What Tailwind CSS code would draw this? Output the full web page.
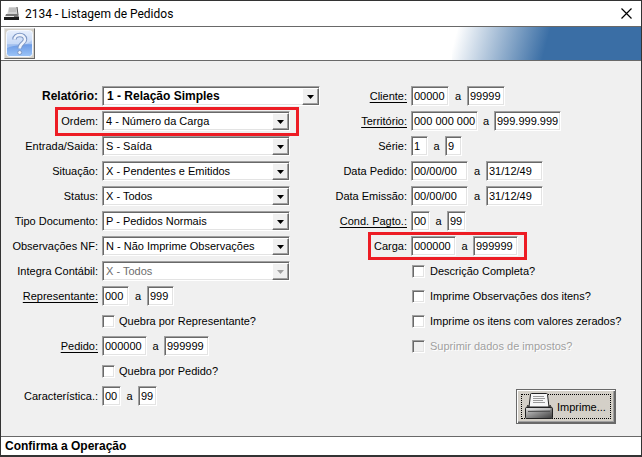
<!DOCTYPE html>
<html lang="pt-BR">
<head>
<meta charset="utf-8">
<title>2134 - Listagem de Pedidos</title>
<script src="https://cdn.jsdelivr.net/npm/@tailwindcss/browser@4"></script>
</head>
<body class="min-h-screen flex flex-col border border-b-2 border-[#333333] bg-[#f0f0f0] font-['Liberation_Sans',Arial,sans-serif] text-[11px] leading-4 text-black">
<header class="flex h-[25px] items-center bg-white pl-[3px] pr-[9px]">
  <svg class="h-4 w-4" viewBox="0 0 16 16" aria-hidden="true">
    <path d="M5 1h8l1 8H3z" fill="#d2d2d2"/><path d="M13 1l1 8" stroke="#555" fill="none"/><path d="M5 3h7M5 5h7" stroke="#aaa"/>
    <path d="M2 8h12l1 3H1z" fill="#777"/><path d="M0 11h15v3H0z" fill="#1a1a1a"/><path d="M1 10.500h9" stroke="#eee"/>
  </svg>
  <h1 class="ml-[5px] flex-1 font-[Roboto,'Noto_Sans',sans-serif] text-[12px]">2134 - Listagem de Pedidos</h1>
  <button type="button" aria-label="Fechar" class="h-[11px] w-[11px]">
    <svg viewBox="0 0 11 11" class="h-[11px] w-[11px]"><path d="M.5.5l10 10M10.500.5l-10 10" stroke="#000" stroke-width="1.200"/></svg>
  </button>
</header>
<div class="flex h-[35px] items-center justify-between border-y border-[#696969] bg-white pl-[3px]">
  <button type="button" aria-label="Ajuda" class="h-[31px] w-[31px] border border-t-[#e3e3e3] border-l-[#e3e3e3] border-r-[#696969] border-b-[#696969] bg-[#d4d0c8] p-px">
    <svg viewBox="0 0 27 27" class="h-[27px] w-[27px]" aria-hidden="true">
      <defs><linearGradient id="help" x1="0" y1="0" x2="0" y2="1"><stop offset="0" stop-color="#dbe7fb"/><stop offset=".5" stop-color="#a9c6f3"/><stop offset=".55" stop-color="#6d9ce6"/><stop offset="1" stop-color="#9cc4f7"/></linearGradient></defs>
      <rect x=".5" y=".5" width="26" height="26" rx="3" fill="url(#help)" stroke="#f4f8ff"/>
      <path d="M1 1h25v9C20 17 10 14 1 18z" fill="#fff" opacity=".35"/>
      <path d="M8.500 9.500C8.500 3.500 19 3.500 19 9.500 19 13.500 13.700 13 13.700 18.500" fill="none" stroke="#7d97c4" stroke-width="4.500"/>
      <path d="M8.500 9.500C8.500 3.500 19 3.500 19 9.500 19 13.500 13.700 13 13.700 18.500" fill="none" stroke="#eef3fc" stroke-width="2.500"/>
      <circle cx="13.700" cy="22.500" r="2" fill="#eef3fc" stroke="#7d97c4"/>
    </svg>
  </button>
  <div class="h-full w-[189px] bg-[linear-gradient(105deg,#fff_3%,#3a6ea5_50%)]"></div>
</div>

<main class="grid flex-1 grid-cols-[333px_1fr] pt-[25px] pb-3">
  <form class="flex flex-col gap-[5px]" id="left">
    <div class="flex h-5 items-center gap-1">
      <label for="rel" class="w-[97px] text-right text-[12px] font-bold">Relatório:</label>
      <div class="relative w-[218px]">
        <select id="rel" class="block h-5 w-full appearance-none border border-t-[#a0a0a0] border-l-[#a0a0a0] border-r-white border-b-white bg-white pl-1 text-[12px] font-bold shadow-[inset_1px_1px_#696969,inset_-1px_-1px_#e3e3e3]"><option>1 - Relação Simples</option></select>
        <span class="pointer-events-none absolute top-[2px] right-px flex h-[17px] w-[17px] items-center justify-center border border-t-white border-l-white border-r-[#696969] border-b-[#696969] bg-[#f0f0f0] shadow-[inset_-1px_-1px_#a0a0a0]"><svg class="h-1 w-[7px]" viewBox="0 0 7 4"><path d="M0 0h7L3.500 4z"/></svg></span>
      </div>
    </div>
    <div class="relative flex h-5 items-center gap-1">
      <label for="ord" class="w-[97px] text-right">Ordem:</label>
      <div class="relative w-[188px]">
        <select id="ord" class="block h-5 w-full appearance-none border border-t-[#a0a0a0] border-l-[#a0a0a0] border-r-white border-b-white bg-white pl-[3px] shadow-[inset_1px_1px_#696969,inset_-1px_-1px_#e3e3e3]"><option>4 - Número da Carga</option></select>
        <span class="pointer-events-none absolute top-[2px] right-px flex h-[17px] w-[17px] items-center justify-center border border-t-white border-l-white border-r-[#696969] border-b-[#696969] bg-[#f0f0f0] shadow-[inset_-1px_-1px_#a0a0a0]"><svg class="h-1 w-[7px]" viewBox="0 0 7 4"><path d="M0 0h7L3.500 4z"/></svg></span>
      </div>
      <div class="pointer-events-none absolute -top-1 -bottom-[5px] left-[54px] w-[244px] border-3 border-[#ed1c24]"></div>
    </div>
    <div class="flex h-5 items-center gap-1">
      <label for="ent" class="w-[97px] text-right">Entrada/Saida:</label>
      <div class="relative w-[188px]">
        <select id="ent" class="block h-5 w-full appearance-none border border-t-[#a0a0a0] border-l-[#a0a0a0] border-r-white border-b-white bg-white pl-[3px] shadow-[inset_1px_1px_#696969,inset_-1px_-1px_#e3e3e3]"><option>S - Saída</option></select>
        <span class="pointer-events-none absolute top-[2px] right-px flex h-[17px] w-[17px] items-center justify-center border border-t-white border-l-white border-r-[#696969] border-b-[#696969] bg-[#f0f0f0] shadow-[inset_-1px_-1px_#a0a0a0]"><svg class="h-1 w-[7px]" viewBox="0 0 7 4"><path d="M0 0h7L3.500 4z"/></svg></span>
      </div>
    </div>
    <div class="flex h-5 items-center gap-1">
      <label for="sit" class="w-[97px] text-right">Situação:</label>
      <div class="relative w-[188px]">
        <select id="sit" class="block h-5 w-full appearance-none border border-t-[#a0a0a0] border-l-[#a0a0a0] border-r-white border-b-white bg-white pl-[3px] shadow-[inset_1px_1px_#696969,inset_-1px_-1px_#e3e3e3]"><option>X - Pendentes e Emitidos</option></select>
        <span class="pointer-events-none absolute top-[2px] right-px flex h-[17px] w-[17px] items-center justify-center border border-t-white border-l-white border-r-[#696969] border-b-[#696969] bg-[#f0f0f0] shadow-[inset_-1px_-1px_#a0a0a0]"><svg class="h-1 w-[7px]" viewBox="0 0 7 4"><path d="M0 0h7L3.500 4z"/></svg></span>
      </div>
    </div>
    <div class="flex h-5 items-center gap-1">
      <label for="sta" class="w-[97px] text-right">Status:</label>
      <div class="relative w-[188px]">
        <select id="sta" class="block h-5 w-full appearance-none border border-t-[#a0a0a0] border-l-[#a0a0a0] border-r-white border-b-white bg-white pl-[3px] shadow-[inset_1px_1px_#696969,inset_-1px_-1px_#e3e3e3]"><option>X - Todos</option></select>
        <span class="pointer-events-none absolute top-[2px] right-px flex h-[17px] w-[17px] items-center justify-center border border-t-white border-l-white border-r-[#696969] border-b-[#696969] bg-[#f0f0f0] shadow-[inset_-1px_-1px_#a0a0a0]"><svg class="h-1 w-[7px]" viewBox="0 0 7 4"><path d="M0 0h7L3.500 4z"/></svg></span>
      </div>
    </div>
    <div class="flex h-5 items-center gap-1">
      <label for="tip" class="w-[97px] text-right">Tipo Documento:</label>
      <div class="relative w-[188px]">
        <select id="tip" class="block h-5 w-full appearance-none border border-t-[#a0a0a0] border-l-[#a0a0a0] border-r-white border-b-white bg-white pl-[3px] shadow-[inset_1px_1px_#696969,inset_-1px_-1px_#e3e3e3]"><option>P - Pedidos Normais</option></select>
        <span class="pointer-events-none absolute top-[2px] right-px flex h-[17px] w-[17px] items-center justify-center border border-t-white border-l-white border-r-[#696969] border-b-[#696969] bg-[#f0f0f0] shadow-[inset_-1px_-1px_#a0a0a0]"><svg class="h-1 w-[7px]" viewBox="0 0 7 4"><path d="M0 0h7L3.500 4z"/></svg></span>
      </div>
    </div>
    <div class="flex h-5 items-center gap-1">
      <label for="obs" class="w-[97px] text-right">Observações NF:</label>
      <div class="relative w-[188px]">
        <select id="obs" class="block h-5 w-full appearance-none border border-t-[#a0a0a0] border-l-[#a0a0a0] border-r-white border-b-white bg-white pl-[3px] shadow-[inset_1px_1px_#696969,inset_-1px_-1px_#e3e3e3]"><option>N - Não Imprime Observações</option></select>
        <span class="pointer-events-none absolute top-[2px] right-px flex h-[17px] w-[17px] items-center justify-center border border-t-white border-l-white border-r-[#696969] border-b-[#696969] bg-[#f0f0f0] shadow-[inset_-1px_-1px_#a0a0a0]"><svg class="h-1 w-[7px]" viewBox="0 0 7 4"><path d="M0 0h7L3.500 4z"/></svg></span>
      </div>
    </div>
    <div class="flex h-5 items-center gap-1">
      <label for="int" class="w-[97px] text-right">Integra Contábil:</label>
      <div class="relative w-[188px]">
        <select id="int" disabled class="block h-5 w-full appearance-none border border-t-[#a0a0a0] border-l-[#a0a0a0] border-r-white border-b-white bg-white pl-[3px] text-[#6d6d6d] opacity-100 shadow-[inset_1px_1px_#696969,inset_-1px_-1px_#e3e3e3]"><option>X - Todos</option></select>
        <span class="pointer-events-none absolute top-[2px] right-px flex h-[17px] w-[17px] items-center justify-center border border-t-white border-l-white border-r-[#696969] border-b-[#696969] bg-[#f0f0f0] shadow-[inset_-1px_-1px_#a0a0a0]"><svg class="h-1 w-[7px] text-[#a0a0a0]" viewBox="0 0 7 4"><path fill="currentColor" d="M0 0h7L3.500 4z"/></svg></span>
      </div>
    </div>
    <div class="flex h-5 items-center gap-1">
      <label for="rep" class="w-[97px] text-right underline underline-offset-2">Representante:</label>
      <div class="flex items-center">
        <input id="rep" value="000" class="h-5 w-[27px] border border-t-[#a0a0a0] border-l-[#a0a0a0] border-r-white border-b-white bg-white pl-[2px] shadow-[inset_1px_1px_#696969,inset_-1px_-1px_#e3e3e3]">
        <span class="w-[18px] text-center">a</span>
        <input aria-label="Representante final" value="999" class="h-5 w-[27px] border border-t-[#a0a0a0] border-l-[#a0a0a0] border-r-white border-b-white bg-white pl-[2px] shadow-[inset_1px_1px_#696969,inset_-1px_-1px_#e3e3e3]">
      </div>
    </div>
    <div class="flex h-5 items-center gap-1 pl-[101px]">
      <input type="checkbox" id="qrep" class="h-[13px] w-[13px] appearance-none border border-t-[#a0a0a0] border-l-[#a0a0a0] border-r-white border-b-white bg-white shadow-[inset_1px_1px_#696969,inset_-1px_-1px_#e3e3e3]">
      <label for="qrep">Quebra por Representante?</label>
    </div>
    <div class="flex h-5 items-center gap-1">
      <label for="ped" class="w-[97px] text-right underline underline-offset-2">Pedido:</label>
      <div class="flex items-center">
        <input id="ped" value="000000" class="h-5 w-[45px] border border-t-[#a0a0a0] border-l-[#a0a0a0] border-r-white border-b-white bg-white pl-[2px] shadow-[inset_1px_1px_#696969,inset_-1px_-1px_#e3e3e3]">
        <span class="w-[17px] text-center">a</span>
        <input aria-label="Pedido final" value="999999" class="h-5 w-[45px] border border-t-[#a0a0a0] border-l-[#a0a0a0] border-r-white border-b-white bg-white pl-[2px] shadow-[inset_1px_1px_#696969,inset_-1px_-1px_#e3e3e3]">
      </div>
    </div>
    <div class="flex h-5 items-center gap-1 pl-[101px]">
      <input type="checkbox" id="qped" class="h-[13px] w-[13px] appearance-none border border-t-[#a0a0a0] border-l-[#a0a0a0] border-r-white border-b-white bg-white shadow-[inset_1px_1px_#696969,inset_-1px_-1px_#e3e3e3]">
      <label for="qped">Quebra por Pedido?</label>
    </div>
    <div class="flex h-5 items-center gap-1">
      <label for="car" class="w-[97px] text-right">Característica.:</label>
      <div class="flex items-center">
        <input id="car" value="00" class="h-5 w-[19px] border border-t-[#a0a0a0] border-l-[#a0a0a0] border-r-white border-b-white bg-white pl-[2px] shadow-[inset_1px_1px_#696969,inset_-1px_-1px_#e3e3e3]">
        <span class="w-[17px] text-center">a</span>
        <input aria-label="Característica final" value="99" class="h-5 w-[19px] border border-t-[#a0a0a0] border-l-[#a0a0a0] border-r-white border-b-white bg-white pl-[2px] shadow-[inset_1px_1px_#696969,inset_-1px_-1px_#e3e3e3]">
      </div>
    </div>
  </form>

  <form class="flex flex-col gap-[5px]" id="right">
    <div class="flex h-5 items-center gap-1">
      <label for="cli" class="w-[73px] text-right underline underline-offset-2">Cliente:</label>
      <div class="flex items-center">
        <input id="cli" value="00000" class="h-5 w-[38px] border border-t-[#a0a0a0] border-l-[#a0a0a0] border-r-white border-b-white bg-white pl-[2px] shadow-[inset_1px_1px_#696969,inset_-1px_-1px_#e3e3e3]">
        <span class="w-[18px] text-center">a</span>
        <input aria-label="Cliente final" value="99999" class="h-5 w-[38px] border border-t-[#a0a0a0] border-l-[#a0a0a0] border-r-white border-b-white bg-white pl-[2px] shadow-[inset_1px_1px_#696969,inset_-1px_-1px_#e3e3e3]">
      </div>
    </div>
    <div class="flex h-5 items-center gap-1">
      <label for="ter" class="w-[73px] text-right underline underline-offset-2">Território:</label>
      <div class="flex items-center">
        <input id="ter" value="000 000 000" class="h-5 w-[67px] border border-t-[#a0a0a0] border-l-[#a0a0a0] border-r-white border-b-white bg-white pl-[2px] shadow-[inset_1px_1px_#696969,inset_-1px_-1px_#e3e3e3]">
        <span class="w-4 text-center">a</span>
        <input aria-label="Território final" value="999.999.999" class="h-5 w-[67px] border border-t-[#a0a0a0] border-l-[#a0a0a0] border-r-white border-b-white bg-white pl-[2px] shadow-[inset_1px_1px_#696969,inset_-1px_-1px_#e3e3e3]">
      </div>
    </div>
    <div class="flex h-5 items-center gap-1">
      <label for="ser" class="w-[73px] text-right">Série:</label>
      <div class="flex items-center">
        <input id="ser" value="1" class="h-5 w-[17px] border border-t-[#a0a0a0] border-l-[#a0a0a0] border-r-white border-b-white bg-white pl-[2px] shadow-[inset_1px_1px_#696969,inset_-1px_-1px_#e3e3e3]">
        <span class="w-[17px] text-center">a</span>
        <input aria-label="Série final" value="9" class="h-5 w-[17px] border border-t-[#a0a0a0] border-l-[#a0a0a0] border-r-white border-b-white bg-white pl-[2px] shadow-[inset_1px_1px_#696969,inset_-1px_-1px_#e3e3e3]">
      </div>
    </div>
    <div class="flex h-5 items-center gap-1">
      <label for="dpe" class="w-[73px] text-right">Data Pedido:</label>
      <div class="flex items-center">
        <input id="dpe" value="00/00/00" class="h-5 w-[57px] border border-t-[#a0a0a0] border-l-[#a0a0a0] border-r-white border-b-white bg-white pl-[2px] shadow-[inset_1px_1px_#696969,inset_-1px_-1px_#e3e3e3]">
        <span class="w-[18px] text-center">a</span>
        <input aria-label="Data Pedido final" value="31/12/49" class="h-5 w-[57px] border border-t-[#a0a0a0] border-l-[#a0a0a0] border-r-white border-b-white bg-white pl-[2px] shadow-[inset_1px_1px_#696969,inset_-1px_-1px_#e3e3e3]">
      </div>
    </div>
    <div class="flex h-5 items-center gap-1">
      <label for="dem" class="w-[73px] text-right whitespace-nowrap">Data Emissão:</label>
      <div class="flex items-center">
        <input id="dem" value="00/00/00" class="h-5 w-[57px] border border-t-[#a0a0a0] border-l-[#a0a0a0] border-r-white border-b-white bg-white pl-[2px] shadow-[inset_1px_1px_#696969,inset_-1px_-1px_#e3e3e3]">
        <span class="w-[18px] text-center">a</span>
        <input aria-label="Data Emissão final" value="31/12/49" class="h-5 w-[57px] border border-t-[#a0a0a0] border-l-[#a0a0a0] border-r-white border-b-white bg-white pl-[2px] shadow-[inset_1px_1px_#696969,inset_-1px_-1px_#e3e3e3]">
      </div>
    </div>
    <div class="flex h-5 items-center gap-1">
      <label for="con" class="w-[73px] text-right whitespace-nowrap underline underline-offset-2">Cond. Pagto.:</label>
      <div class="flex items-center">
        <input id="con" value="00" class="h-5 w-[19px] border border-t-[#a0a0a0] border-l-[#a0a0a0] border-r-white border-b-white bg-white pl-[2px] shadow-[inset_1px_1px_#696969,inset_-1px_-1px_#e3e3e3]">
        <span class="w-[17px] text-center">a</span>
        <input aria-label="Cond. Pagto. final" value="99" class="h-5 w-[19px] border border-t-[#a0a0a0] border-l-[#a0a0a0] border-r-white border-b-white bg-white pl-[2px] shadow-[inset_1px_1px_#696969,inset_-1px_-1px_#e3e3e3]">
      </div>
    </div>
    <div class="relative flex h-5 items-center gap-1">
      <label for="crg" class="w-[73px] text-right">Carga:</label>
      <div class="flex items-center">
        <input id="crg" value="000000" class="h-5 w-[45px] border border-t-[#a0a0a0] border-l-[#a0a0a0] border-r-white border-b-white bg-white pl-[2px] shadow-[inset_1px_1px_#696969,inset_-1px_-1px_#e3e3e3]">
        <span class="w-[17px] text-center">a</span>
        <input aria-label="Carga final" value="999999" class="h-5 w-[45px] border border-t-[#a0a0a0] border-l-[#a0a0a0] border-r-white border-b-white bg-white pl-[2px] shadow-[inset_1px_1px_#696969,inset_-1px_-1px_#e3e3e3]">
      </div>
      <div class="pointer-events-none absolute -top-1 -bottom-1 left-[34px] w-[159px] border-3 border-[#ed1c24]"></div>
    </div>
    <div class="flex h-5 items-center gap-[5px] pl-[78px]">
      <input type="checkbox" id="dco" class="h-[13px] w-[13px] appearance-none border border-t-[#a0a0a0] border-l-[#a0a0a0] border-r-white border-b-white bg-white shadow-[inset_1px_1px_#696969,inset_-1px_-1px_#e3e3e3]">
      <label for="dco">Descrição Completa?</label>
    </div>
    <div class="flex h-5 items-center gap-[5px] pl-[78px]">
      <input type="checkbox" id="iob" class="h-[13px] w-[13px] appearance-none border border-t-[#a0a0a0] border-l-[#a0a0a0] border-r-white border-b-white bg-white shadow-[inset_1px_1px_#696969,inset_-1px_-1px_#e3e3e3]">
      <label for="iob">Imprime Observações dos itens?</label>
    </div>
    <div class="flex h-5 items-center gap-[5px] pl-[78px]">
      <input type="checkbox" id="ize" class="h-[13px] w-[13px] appearance-none border border-t-[#a0a0a0] border-l-[#a0a0a0] border-r-white border-b-white bg-white shadow-[inset_1px_1px_#696969,inset_-1px_-1px_#e3e3e3]">
      <label for="ize">Imprime os itens com valores zerados?</label>
    </div>
    <div class="flex h-5 items-center gap-[5px] pl-[78px]">
      <input type="checkbox" id="sup" disabled class="h-[13px] w-[13px] appearance-none border border-t-[#a0a0a0] border-l-[#a0a0a0] border-r-white border-b-white bg-[#f0f0f0] shadow-[inset_1px_1px_#696969,inset_-1px_-1px_#e3e3e3]">
      <label for="sup" class="text-[#a0a0a0] [text-shadow:1px_1px_#fff]">Suprimir dados de impostos?</label>
    </div>
    <button type="button" class="mt-7 mr-[25px] flex h-[35px] w-[100px] self-end border border-[#696969] bg-[#d4d0c8] p-1 shadow-[inset_1px_1px_#fff,inset_-1px_-1px_#696969,inset_-2px_-2px_#a0a0a0]">
      <span class="flex h-[25px] w-[90px] items-center gap-1 border border-dotted border-black pl-[3px]">
        <svg class="h-[27px] w-7 shrink-0" viewBox="0 0 28 27" aria-hidden="true">
          <defs>
            <linearGradient id="tray" x1="0" y1="0" x2="0" y2="1"><stop offset="0" stop-color="#f4f4f4"/><stop offset="1" stop-color="#8a8a8a"/></linearGradient>
            <linearGradient id="base" x1="0" y1="0" x2="1" y2="1"><stop offset="0" stop-color="#d8d8d8"/><stop offset="1" stop-color="#3c3c3c"/></linearGradient>
          </defs>
          <path d="M3 12L.8 16h26.400L25 12v2H3z" fill="url(#tray)" stroke="#333"/>
          <path d="M5.500 1.500Q5.500.5 6.500.5h15q1 0 1 1L24 14H4z" fill="#f7f7f7" stroke="#222"/>
          <path d="M8 3.500h11M8 5.500h12M8 7.500h10M8 9.500h12" stroke="#999"/>
          <rect x=".5" y="14.500" width="27" height="11" rx="1" fill="url(#base)" stroke="#222"/>
          <path d="M1.500 16h24" stroke="#eee"/><path d="M3 18.500h22" stroke="#555"/>
        </svg>
        <span>Imprime...</span>
      </span>
    </button>
  </form>
</main>
<footer class="flex h-[19px] items-center border-t border-[#696969] bg-white pl-1 text-[12px] font-bold">Confirma a Operação</footer>
</body>
</html>
